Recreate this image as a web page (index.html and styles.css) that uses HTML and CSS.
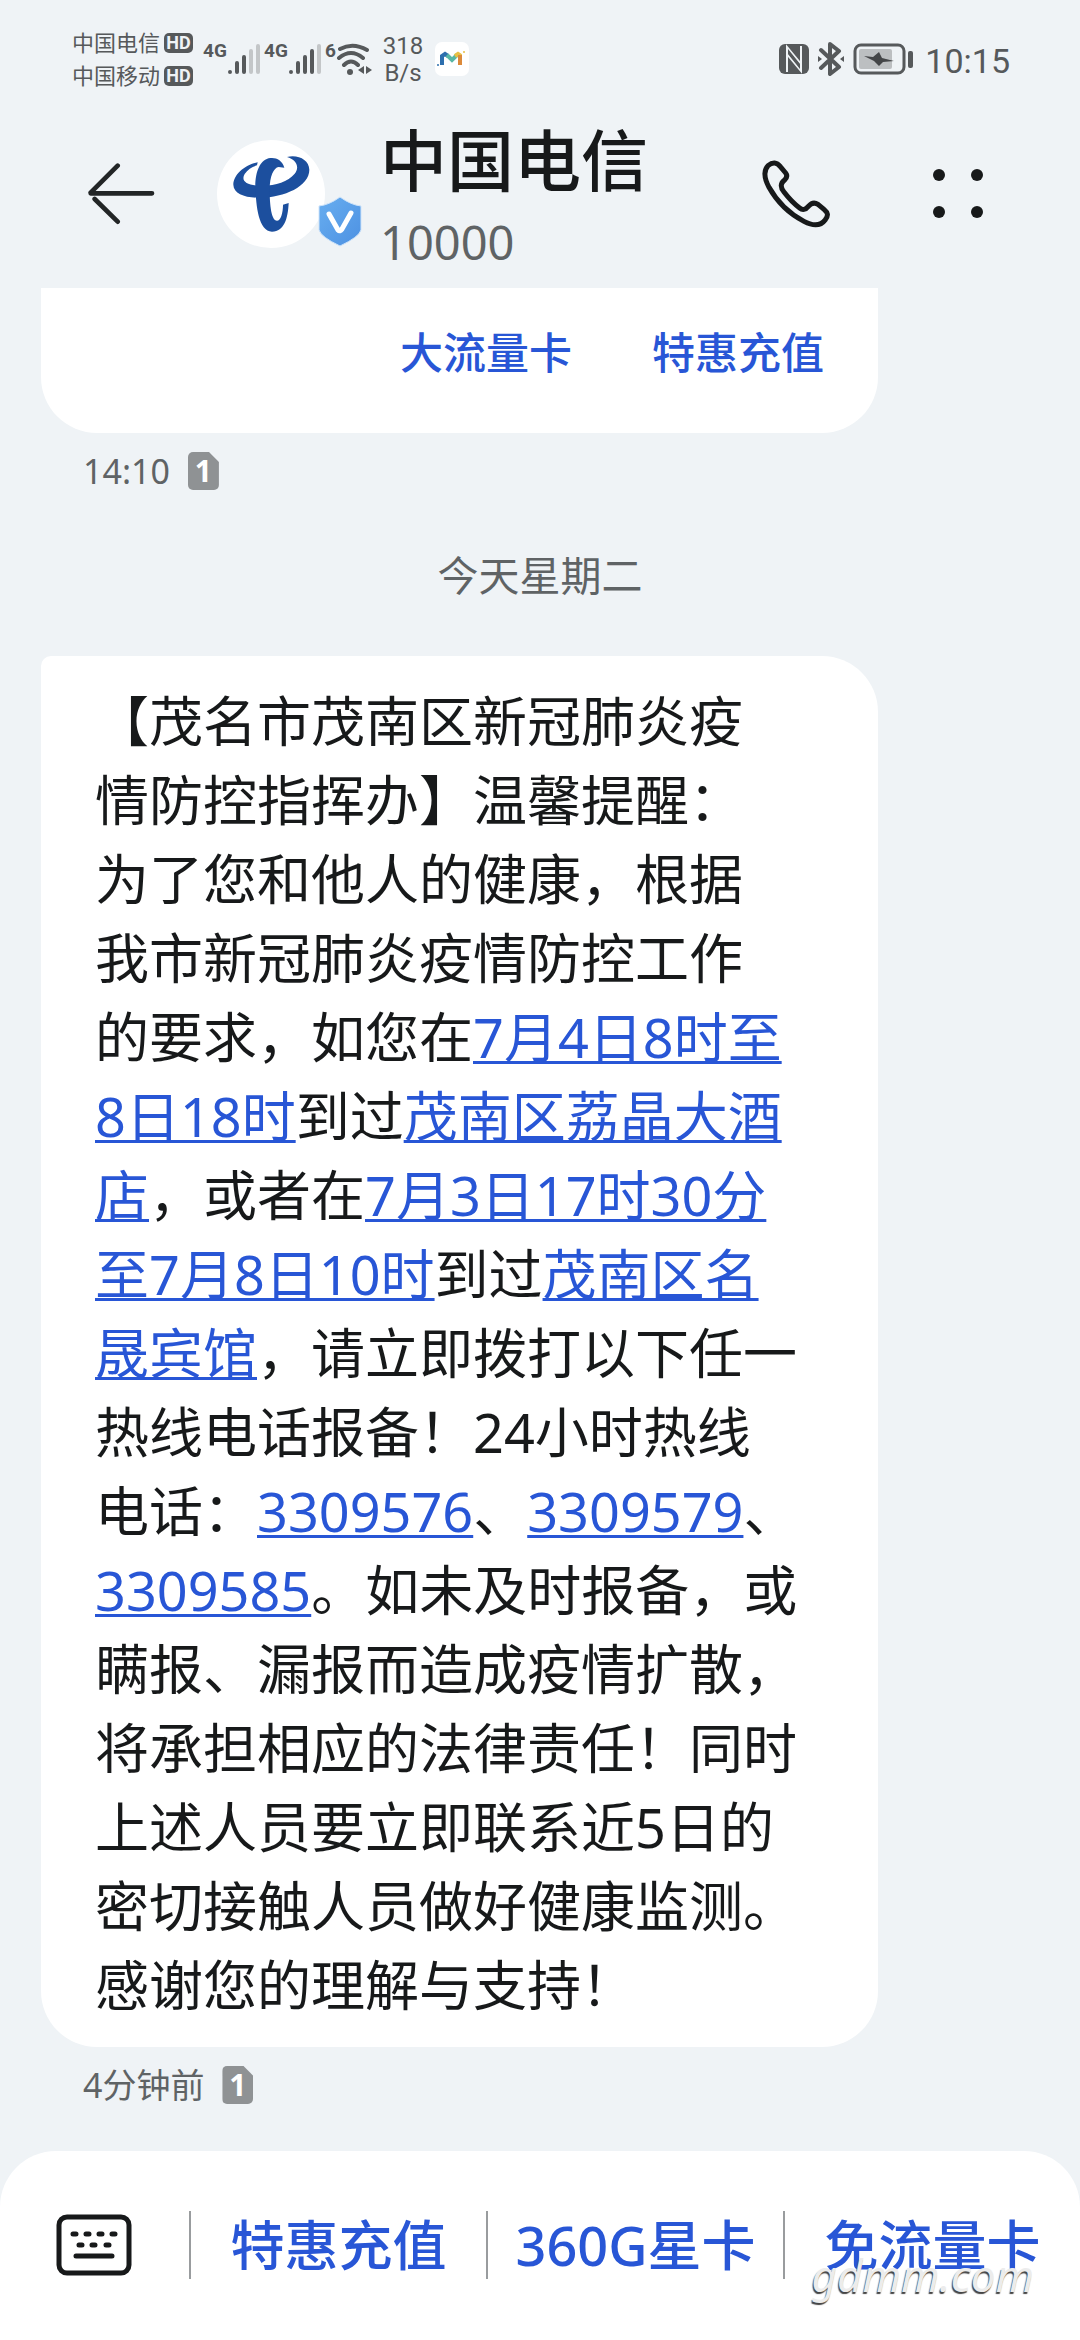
FILE: index.html
```html
<!DOCTYPE html>
<html lang="zh-CN">
<head>
<meta charset="utf-8">
<meta name="viewport" content="width=device-width, initial-scale=1">
<title>中国电信</title>
<link rel="stylesheet" href="styles.css">
</head>
<body>
<div class="status">
  <div class="carriers">
    <div class="carrier">中国电信<span class="hd">HD</span></div>
    <div class="carrier">中国移动<span class="hd">HD</span></div>
  </div>
  <div class="signal">
    <span class="net">4G</span>
    <svg width="34" height="32" viewBox="0 0 34 32"><g stroke-width="4" stroke-linecap="round" stroke="#56595b"><path d="M3 29v0M10 29v-9M17 29v-15"/><path stroke="#c3c6c8" d="M24 29V8M31 29V3"/></g></svg>
  </div>
  <div class="signal">
    <span class="net">4G</span>
    <svg width="34" height="32" viewBox="0 0 34 32"><g stroke-width="4" stroke-linecap="round" stroke="#56595b"><path d="M3 29v0M10 29v-9M17 29v-15M24 29V8"/><path stroke="#c3c6c8" d="M31 29V3"/></g></svg>
  </div>
  <div class="wifi">
    <span class="net">6</span>
    <svg width="36" height="32" viewBox="0 0 36 32"><g fill="none" stroke="#56595b" stroke-width="4" stroke-linecap="round"><path d="M4 6Q17-1 31 7M3 15Q15 5 27 15M8 22Q15 15 22 22"/></g><circle cx="14" cy="29" r="3" fill="#56595b"/><path d="M28 23v8l-6-4zM30 23v8l6-4z" fill="#56595b"/></svg>
  </div>
  <div class="speed">318<br>B/s</div>
  <svg class="app" width="34" height="34" viewBox="0 0 34 34"><rect width="34" height="34" rx="7" fill="#fff"/><path d="M7 23V14l3-2 3 2" fill="none" stroke="#2d6fae" stroke-width="4"/><path d="M12 13l5 5 5-5" fill="none" stroke="#58b7a5" stroke-width="4"/><path d="M20 14l3-2 3 2" fill="none" stroke="#e8c044" stroke-width="4"/><path d="M25 13v10" stroke="#dc8a3a" stroke-width="4"/><circle cx="3" cy="23" r="1" fill="#2d6fae"/><circle cx="29" cy="10" r="1" fill="#e8c044"/></svg>
  <div class="status-right">
    <svg width="30" height="30" viewBox="0 0 30 30"><rect width="30" height="30" rx="6" fill="#56595b"/><path d="M8 28V3l14 17M22 2v25L8 10" fill="none" stroke="#eff3f6" stroke-width="2"/><path d="M9 5l12 15v5L9 10z" fill="#56595b"/></svg>
    <svg width="26" height="34" viewBox="0 0 26 34"><path d="M3 8l18 17-9 7V2l9 7L3 26" fill="none" stroke="#56595b" stroke-width="4" stroke-linejoin="round" stroke-linecap="round"/><path d="M0 14l4 3-4 3zM26 14l-4 3 4 3z" fill="#56595b"/></svg>
    <svg width="60" height="32" viewBox="0 0 60 32"><rect x="2" y="2" width="49" height="28" rx="6" fill="none" stroke="#56595b" stroke-width="3"/><rect x="6" y="6" width="33" height="20" rx="2" fill="#bcbfc1"/><path d="M11 13l9 1 6-5 3 6 12 3-11 1-4 4-5-5z" fill="#444648"/><rect x="55" y="8" width="5" height="17" rx="2" fill="#56595b"/></svg>
    <time class="clock">10:15</time>
  </div>
</div>

<header class="header">
  <button class="icon-btn" aria-label="返回">
    <svg width="68" height="62" viewBox="86 130 204 186"><path d="M175 138L94 219M94 221H278M106 238L175 306" fill="none" stroke="#222526" stroke-width="14" stroke-linecap="round"/></svg>
  </button>
  <div class="avatar">
    <svg width="108" height="108" viewBox="470 56 324 324"><circle cx="632" cy="218" r="162" fill="#fff"/><g fill="#1c4f9e"><path d="M592 123C553 130 519 160 519 190C520 218 556 230 600 229C672 228 747 195 747 145C746 116 714 99 680 107C706 114 720 136 703 157C682 182 640 195 600 193C558 192 541 178 553 158C562 144 576 136 590 132Z"/><path d="M672 139C665 116 648 108 630 110C600 113 585 150 585 195C587 255 595 331 635 331C672 331 683 290 685 245L668 250C668 275 661 298 650 298C633 298 628 250 628 205C628 165 640 139 655 137Z"/></g></svg>
    <svg class="verified" width="46" height="52" viewBox="0 0 46 52"><defs><linearGradient id="shield" x1="0" y1="0" x2="1" y2="1"><stop offset="0" stop-color="#68aef0"/><stop offset="1" stop-color="#4d91e2"/></linearGradient></defs><path d="M23 1Q34 9 44 10V34Q42 41 23 50Q4 41 2 34V10Q12 9 23 1Z" fill="url(#shield)" stroke="#cfe4fa"/><path d="M12 18L21 34Q23 36 25 33L34 17" fill="none" stroke="#fff" stroke-width="5" stroke-linecap="round"/></svg>
  </div>
  <div class="contact">
    <h1 class="name">中国电信</h1>
    <p class="number">10000</p>
  </div>
  <button class="icon-btn call" aria-label="拨打电话">
    <svg width="68" height="68" viewBox="91 88 204 204"><path d="M109 105Q130 88 146 108L162 127Q170 138 158 149Q140 163 157 184Q180 214 204 232Q217 243 230 227Q244 211 259 221L278 237Q295 250 281 267Q260 295 217 272Q150 238 112 170Q89 126 109 105Z" fill="none" stroke="#17191a" stroke-width="15" stroke-linejoin="round"/></svg>
  </button>
  <button class="icon-btn" aria-label="更多">
    <svg width="52" height="50" viewBox="0 0 52 50"><g fill="#17191a"><circle cx="7" cy="6" r="6"/><circle cx="45" cy="6" r="6"/><circle cx="7" cy="43" r="6"/><circle cx="45" cy="43" r="6"/></g></svg>
  </button>
</header>

<main class="thread">
  <section class="bubble bubble-cut">
    <button class="chip">大流量卡</button>
    <button class="chip">特惠充值</button>
  </section>
  <div class="meta"><time>14:10</time><span class="sim">1</span></div>
  <p class="day">今天星期二</p>
  <article class="bubble message">
    【茂名市茂南区新冠肺炎疫<br>情防控指挥办】温馨提醒：<br>为了您和他人的健康，根据<br>我市新冠肺炎疫情防控工作<br>的要求，如您在<a href="#">7月4日8时至<br>8日18时</a>到过<a href="#">茂南区荔晶大酒<br>店</a>，或者在<a href="#">7月3日17时30分<br>至7月8日10时</a>到过<a href="#">茂南区名<br>晟宾馆</a>，请立即拨打以下任一<br>热线电话报备！24小时热线<br>电话：<a href="#">3309576</a>、<a href="#">3309579</a>、<br><a href="#">3309585</a>。如未及时报备，或<br>瞒报、漏报而造成疫情扩散，<br>将承担相应的法律责任！同时<br>上述人员要立即联系近5日的<br>密切接触人员做好健康监测。<br>感谢您的理解与支持！
  </article>
  <div class="meta"><time>4分钟前</time><span class="sim">1</span></div>
</main>

<footer class="menu">
  <button class="keyboard" aria-label="键盘">
    <svg width="76" height="62" viewBox="0 0 76 62"><rect x="3" y="3" width="70" height="56" rx="8" fill="none" stroke="#17191a" stroke-width="5"/><path d="M17 20h3M30 20h3M43 20h3M56 20h3M23 31h3M36 31h3M50 31h3M20 42h36" stroke="#17191a" stroke-width="5" stroke-linecap="round"/></svg>
  </button>
  <button class="menu-item">特惠充值</button>
  <button class="menu-item">360G星卡</button>
  <button class="menu-item">免流量卡</button>
  <span class="watermark">gdmm.com</span>
</footer>
</body>
</html>
```
FILE: styles.css
```css
* {
  box-sizing: border-box;
}

body {
  display: flex;
  flex-direction: column;
  min-height: 100vh;
  margin: 0;
  background: #eff3f6;
  color: #17191a;
  font-family: "Noto Sans", "Noto Sans CJK SC", sans-serif;
  text-spacing-trim: space-all;
}

button {
  padding: 0;
  border: 0;
  background: none;
  color: inherit;
  font: inherit;
}

svg {
  display: block;
}

h1,
p {
  margin: 0;
}

.status {
  display: flex;
  align-items: center;
  height: 100px;
  padding: 18px 70px 0 72px;
  color: #56595b;
}

.carriers {
  margin-right: 10px;
}

.carrier {
  display: flex;
  align-items: center;
  gap: 4px;
  font-size: 22px;
  line-height: 33px;
}

.hd {
  width: 29px;
  border-radius: 5px;
  background: #56595b;
  color: #eff3f6;
  font-family: "Liberation Sans Narrow", "Roboto", sans-serif;
  font-weight: 700;
  font-size: 18px;
  line-height: 20px;
  text-align: center;
}

.signal,
.wifi {
  display: flex;
  align-items: flex-start;
}

.signal {
  width: 61px;
}

.wifi {
  width: 56px;
}

.net {
  font-family: "Liberation Sans Narrow", "Roboto", sans-serif;
  font-weight: 700;
  font-size: 19px;
  line-height: 16px;
}

.speed {
  width: 44px;
  padding-top: 2px;
  font-family: Roboto, sans-serif;
  font-size: 24px;
  line-height: 27px;
  text-align: center;
}

.app {
  margin-left: 10px;
}

.status-right {
  display: flex;
  align-items: center;
  gap: 9px;
  margin-left: auto;
}

.clock {
  margin-left: 3px;
  padding-top: 3px;
  font-family: Roboto, sans-serif;
  font-size: 34px;
  line-height: 34px;
}

.header {
  display: flex;
  align-items: center;
  height: 188px;
  padding: 0 96px 0 88px;
}

.avatar {
  position: relative;
  margin: 0 55px 0 61px;
}

.verified {
  position: absolute;
  right: -38px;
  bottom: 0;
}

.contact {
  flex: 1;
  padding-top: 12px;
}

.name {
  font-weight: 500;
  font-size: 67px;
  line-height: 84px;
}

.number {
  color: #5f6365;
  font-size: 47px;
  line-height: 80px;
}

.call {
  margin-right: 102px;
}

.thread {
  flex: 1;
}

.bubble {
  width: calc(100% - 243px);
  margin-left: 41px;
  background: #fff;
}

.bubble-cut {
  display: flex;
  justify-content: flex-end;
  gap: 80px;
  padding: 34px 54px 49px;
  border-radius: 0 0 56px 56px;
}

.chip {
  color: #2856d6;
  font-weight: 500;
  font-size: 43px;
  line-height: 62px;
}

.meta {
  display: flex;
  align-items: center;
  gap: 18px;
  padding: 18px 83px;
  color: #5f6365;
  font-size: 34px;
  line-height: 40px;
}

.sim {
  width: 31px;
  background: #8f9294;
  border-radius: 5px;
  color: #fff;
  font-weight: 700;
  font-size: 30px;
  line-height: 38px;
  text-align: center;
  clip-path: polygon(0 0, 68% 0, 100% 26%, 100% 100%, 0 100%);
}

.day {
  padding: 36px 0 51px;
  color: #5f6365;
  font-size: 41px;
  line-height: 60px;
  text-align: center;
}

.message {
  padding: 26px 54px 22px;
  border-radius: 10px 56px 56px 56px;
  font-size: 54px;
  line-height: 79px;
  white-space: nowrap;
}

.message a {
  color: #2856d6;
  text-decoration-thickness: 3px;
  text-underline-offset: 3px;
  text-decoration-skip-ink: none;
}

.menu {
  position: relative;
  display: flex;
  align-items: center;
  padding: 60px 0 61px;
  border-radius: 56px 56px 0 0;
  background: #fff;
}

.keyboard {
  width: 189px;
  padding-left: 56px;
}

.menu-item {
  flex: 1;
  border-left: 2px solid #999c9e;
  color: #2856d6;
  font-weight: 500;
  font-size: 54px;
  line-height: 68px;
}

.watermark {
  position: absolute;
  right: 46px;
  bottom: 35px;
  color: #ececec;
  font-style: italic;
  font-size: 44px;
  line-height: 60px;
  text-shadow: -1px 2px 1px #444;
}
```
